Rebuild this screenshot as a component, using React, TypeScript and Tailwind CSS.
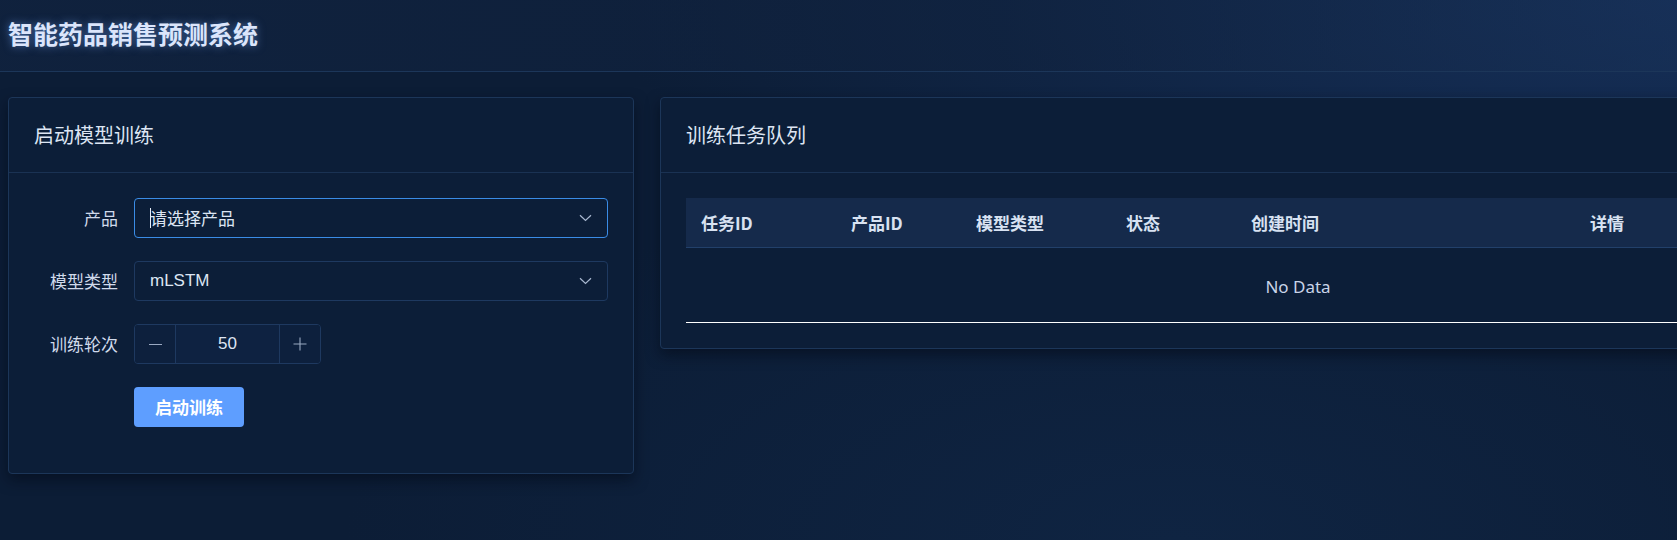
import React from "react";

const cjk = { fontFamily: '"Noto Sans CJK SC", "Noto Sans", sans-serif' };
const latin = { fontFamily: '"Liberation Sans", "Noto Sans CJK SC", sans-serif' };

function Chevron() {
  return (
    <svg width="13" height="8" viewBox="0 0 13 8" fill="none">
      <path d="M1 1.2L6.5 6.5L12 1.2" stroke="#a9b8d0" strokeWidth="1.2" />
    </svg>
  );
}

function FormRow({ label, children }: { label: string; children: React.ReactNode }) {
  return (
    <div className="flex items-center h-10 mb-[23px]">
      <div className="w-[84px] text-right text-[17px] text-[#d0daeb] shrink-0">{label}</div>
      <div className="ml-4 flex-1 flex items-center h-10">{children}</div>
    </div>
  );
}

export default function App() {
  const cols = [
    { t: "任务ID", w: "w-[150px]" },
    { t: "产品ID", w: "w-[125px]" },
    { t: "模型类型", w: "w-[150px]" },
    { t: "状态", w: "w-[125px]" },
    { t: "创建时间", w: "w-[339px]" },
    { t: "详情", w: "flex-1" },
  ];
  return (
    <div
      className="relative w-full h-[540px] overflow-hidden bg-[#0c1d36] bg-[radial-gradient(ellipse_at_100%_0%,#16305a_0%,rgba(22,48,90,0)_45%),radial-gradient(ellipse_at_70%_100%,#0f2442_0%,rgba(15,36,66,0)_50%)]"
      style={cjk}
    >
      <header className="h-[72px] border-b border-[#1c3659] flex items-center px-2 bg-[linear-gradient(90deg,rgba(16,34,62,0.9)_0%,rgba(16,34,62,0.6)_60%,rgba(23,48,86,0.6)_100%)]">
        <h1 className="text-[25px] font-bold text-[#dbe5fb] [text-shadow:0_0_8px_rgba(120,170,255,0.55)] -mt-1">
          智能药品销售预测系统
        </h1>
      </header>

      <main className="flex gap-[26px] pl-2 pt-[25px]">
        {/* Left card */}
        <section className="w-[626px] shrink-0 rounded-[4px] border border-[#1c3659] bg-[#0c1e38] shadow-[0_6px_14px_rgba(4,10,22,0.55)]">
          <div className="h-[75px] border-b border-[#1a3253] flex items-center px-[25px]">
            <h2 className="text-[20px] text-[#dde5f3]">启动模型训练</h2>
          </div>
          <div className="px-[25px] pt-[25px] pb-[23px]">
            <FormRow label="产品">
              <div className="w-full h-10 rounded-[4px] border border-[#3a8ce6] flex items-center px-[15px] justify-between bg-[#0c1e38]">
                <div className="flex items-center">
                  <span className="w-px h-[20px] bg-[#e6edf8] -mr-[1px]" />
                  <span className="text-[17px] text-[#dce5f3]">请选择产品</span>
                </div>
                <Chevron />
              </div>
            </FormRow>
            <FormRow label="模型类型">
              <div className="w-full h-10 rounded-[4px] border border-[#1e3960] flex items-center px-[15px] justify-between bg-[#0c1e38]">
                <span className="text-[17px] text-[#dde5f3]" style={latin}>mLSTM</span>
                <Chevron />
              </div>
            </FormRow>
            <FormRow label="训练轮次">
              <div className="w-[187px] h-10 rounded-[4px] border border-[#1e3960] flex items-stretch overflow-hidden">
                <div className="w-[41px] flex items-center justify-center border-r border-[#1e3960] bg-[#0d203d]">
                  <span className="block w-[13px] h-px bg-[#9aa9c2]" />
                </div>
                <div className="flex-1 flex items-center justify-center bg-[#0e2241] text-[17px] text-[#dde5f3]" style={latin}>
                  50
                </div>
                <div className="w-[41px] flex items-center justify-center border-l border-[#1e3960] bg-[#0d203d]">
                  <svg width="14" height="14" viewBox="0 0 14 14">
                    <path d="M7 0.5V13.5M0.5 7H13.5" stroke="#9aa9c2" strokeWidth="1.1" />
                  </svg>
                </div>
              </div>
            </FormRow>
            <div className="flex items-center h-10 mb-[23px]">
              <div className="w-[84px] shrink-0" />
              <button className="ml-4 w-[110px] h-10 rounded-[4px] bg-[#5e9eff] text-white text-[17px] font-bold">
                启动训练
              </button>
            </div>
          </div>
        </section>

        {/* Right card */}
        <section className="w-[1276px] shrink-0 self-start rounded-[4px] border border-[#1c3659] bg-[#0c1e38] shadow-[0_6px_14px_rgba(4,10,22,0.55)]">
          <div className="h-[75px] border-b border-[#1a3253] flex items-center px-[25px]">
            <h2 className="text-[20px] text-[#dde5f3]">训练任务队列</h2>
          </div>
          <div className="p-[25px]">
            <div className="w-full">
              <div className="flex h-[50px] items-center bg-[#152a4b] border-b border-[#22406a]">
                {cols.map((c) => (
                  <div key={c.t} className={`${c.w} px-[15px] text-[17px] font-bold text-[#d8e2f2]`}>
                    {c.t}
                  </div>
                ))}
              </div>
              <div className="h-[75px] pt-[3px] flex items-center justify-center border-b border-white text-[17px] text-[#c9d4e8]" style={{ fontFamily: '"Noto Sans", sans-serif' }}>
                No Data
              </div>
            </div>
          </div>
        </section>
      </main>
    </div>
  );
}
